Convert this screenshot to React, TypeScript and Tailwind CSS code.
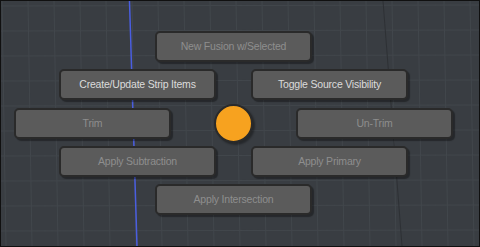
const Btn = ({ label, active = false }: { label: string; active?: boolean }) => (
  <div
    className={
      "flex h-[31px] w-[157px] items-center justify-center rounded-[5px] border-2 border-[#2a2a2a] bg-[#5b5b5b] text-[10.5px] tracking-[-0.2px] shadow-[2px_2px_1px_rgba(0,0,0,0.35)] " +
      (active ? "text-[#dcdcdc]" : "text-[#8e8e8e]")
    }
  >
    {label}
  </div>
);

const Grid = () => {
  const hs = [5, 30, 55, 80, 105, 130, 155, 180, 205, 230];
  const vs = [1, 27, 53, 79, 105, 131, 157, 183, 209, 235, 261, 287, 313, 339, 365, 391, 417, 443, 469];
  return (
    <svg className="pointer-events-none absolute inset-0" width="478" height="245" viewBox="0 0 478 245">
      {hs.map((y) => (
        <line key={"h" + y} x1="0" y1={y} x2="478" y2={y - 1} stroke="#42474c" strokeWidth="1" />
      ))}
      {vs.map((x) => (
        <line key={"v" + x} x1={x} y1="0" x2={x + 4} y2="245" stroke="#42474c" strokeWidth="1" />
      ))}
      <line x1="382" y1="0" x2="401" y2="245" stroke="#2e3135" strokeWidth="1" />
      <line x1="128.5" y1="0" x2="136" y2="245" stroke="#4a5ee0" strokeWidth="1.5" />
    </svg>
  );
};

export default function App() {
  return (
    <div
      className="relative h-[247px] w-[480px] overflow-hidden border border-[#101010] bg-[#393d42]"
      style={{ fontFamily: '"Liberation Sans", Arial, sans-serif' }}
    >
      <Grid />
      <div className="relative flex flex-col items-center pr-[13px] pt-[30px]">
        <Btn label="New Fusion w/Selected" />
        <div className="mt-[7px] flex gap-[35px]">
          <Btn label="Create/Update Strip Items" active />
          <Btn label="Toggle Source Visibility" active />
        </div>
        <div className="mt-[8px] flex h-[31px] items-center">
          <Btn label="Trim" />
          <div className="mx-[43px] -my-[4px] h-[39px] w-[39px] rounded-full border-2 border-[#2a2a2a] bg-[#f7a21f] shadow-[2px_2px_2px_rgba(0,0,0,0.35)]" />
          <Btn label="Un-Trim" />
        </div>
        <div className="mt-[7px] flex gap-[35px]">
          <Btn label="Apply Subtraction" />
          <Btn label="Apply Primary" />
        </div>
        <div className="mt-[7px]">
          <Btn label="Apply Intersection" />
        </div>
      </div>
    </div>
  );
}
